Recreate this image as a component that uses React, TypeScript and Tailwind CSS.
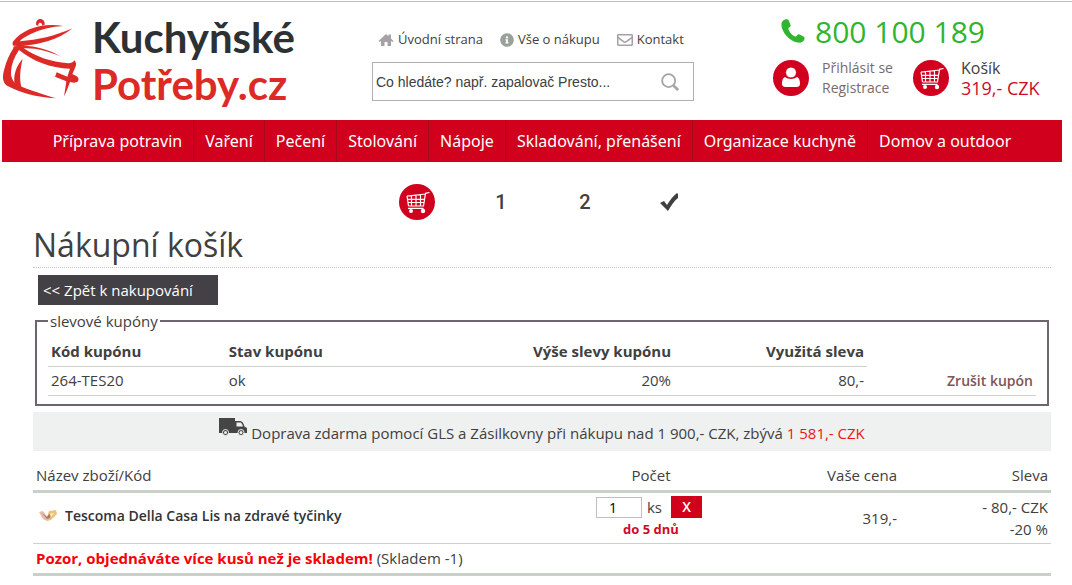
import type { ReactNode } from "react";
import { FaInfoCircle, FaRegEnvelope } from "react-icons/fa";

const categories = [
  "Příprava potravin",
  "Vaření",
  "Pečení",
  "Stolování",
  "Nápoje",
  "Skladování, přenášení",
  "Organizace kuchyně",
  "Domov a outdoor",
];

function PotLogo() {
  return (
    <svg viewBox="0 0 252 270" className="h-[90px] w-[84px] shrink-0" fill="#dc2b27" aria-hidden="true">
      <path d="M109 34C106 21 114 14 122 15c9 1 13 10 12 17l-7 3c0-6-3-9-7-9-4 0-5 4-5 9z" />
      <path fillRule="evenodd" d="M38 84C50 68 66 56 88 46c30-12 65-16 102-10-36 2-68 10-98 24-16 8-27 14-33 22 56-4 104-16 159-39-45 35-95 47-149 53-14 1-24 1-31-2z" />
      <path d="M41 97c50-7 98 6 143 31-40-17-79-27-113-25 38 25 80 41 134 45 8 0 14-2 18-9 6 6 7 13 3 21l-9 20c8 4 15 7 18 12 2 9-3 14-13 14l-12-2c-5 14-10 28-18 43 3-17 5-31 7-45l-34-14 5-13 32 13 8-24c-60-2-111-22-153-56-15 22-23 44-24 66-1 13 4 24 12 34 25 15 68 28 122 45-60-4-105-17-146-38-15-11-14-30-8-50 6-24 15-43 27-62z" />
      <path d="M44 215c-5-32 4-58 24-81-8 34-11 62-2 92z" />
    </svg>
  );
}

function CartBadge() {
  return (
    <svg viewBox="0 0 36 36" className="size-9 shrink-0" fill="none" aria-hidden="true">
      <circle cx="18" cy="18" r="18" fill="#d1001f" />
      <g stroke="#fff" strokeWidth="1.2">
        <path d="M30.500 8.500l-4 .8-2 12.700H9.500M8 12l18.500-2M8 12l1.500 10M8.500 15.300h17M9 18.500h16.200M12.500 11.500v10.500M17 11v11M21.500 10.500v11.500M9 24.300h15.500" />
      </g>
      <circle cx="12" cy="27" r="2" fill="#fff" />
      <circle cx="24" cy="27" r="2.200" fill="#fff" />
    </svg>
  );
}

function UserBadge() {
  return (
    <svg viewBox="0 0 36 36" className="size-9 shrink-0" aria-hidden="true">
      <circle cx="18" cy="18" r="18" fill="#d1001f" />
      <path fill="#fff" d="M12 17c-2.500 1-3 4-3 7 0 2 1.500 3 3.500 3h11c2 0 3.500-1 3.500-3 0-3-.5-6-3-7-3 2.600-9 2.600-12 0z" />
      <circle cx="18" cy="12.500" r="5.300" fill="#fff" stroke="#d1001f" strokeWidth=".6" />
    </svg>
  );
}

function HomeIcon() {
  return (
    <svg viewBox="0 0 16 16" className="size-4" fill="#a5a2a5" aria-hidden="true">
      <path d="M8 2l2.500 2.200V2.500H13v4L15.500 9l-1 1L13 9v5H9.500v-4h-3v4H3V9l-1.500 1-1-1z" />
    </svg>
  );
}

function TruckIcon() {
  return (
    <svg viewBox="0 0 28 18" className="mb-2 h-[18px] w-7" fill="#454545" aria-hidden="true">
      <path fillRule="evenodd" d="M0 0h16v3h5c3 0 4 4 4.500 5.500L28 10v5H0zM17.500 4.500v4H24c-.6-2-1.400-4-3-4z" />
      <circle cx="6.500" cy="14.500" r="3" stroke="#eff1f0" />
      <circle cx="22" cy="14.500" r="3" stroke="#eff1f0" />
      <circle cx="6.500" cy="14.500" r="1.500" fill="#eff1f0" />
      <circle cx="22" cy="14.500" r="1.500" fill="#eff1f0" />
    </svg>
  );
}

function Step({ children }: { children: ReactNode }) {
  return <li className="flex w-[84px] items-center justify-center">{children}</li>;
}

export default function App() {
  return (
    <div className="mt-px border-t border-[#bdbdbd] bg-white pb-2 font-['Open_Sans',sans-serif] text-[15px] text-[#404040]">
      <header className="flex h-[118px] items-start">
        <a href="#domu" className="flex w-[372px] shrink-0 items-start pt-3">
          <PotLogo />
          <span className="pl-2 font-['Lato',sans-serif] text-[42px] leading-[47px] font-bold text-[#2d3133]">
            Kuchyňské
            <span className="block text-[#dc2b27]">Potřeby.cz</span>
          </span>
        </a>

        <div className="w-[322px] shrink-0 pt-7">
          <nav className="flex h-5 items-center gap-[17px] px-1.5 text-[13px] whitespace-nowrap">
            <a href="#uvod" className="flex items-center gap-1">
              <HomeIcon />
              Úvodní strana
            </a>
            <a href="#nakup" className="flex items-center gap-1">
              <FaInfoCircle className="size-3.5 text-[#9aa09a]" />
              Vše o nákupu
            </a>
            <a href="#kontakt" className="flex items-center gap-1">
              <FaRegEnvelope className="size-4 text-[#a5a2a5]" />
              Kontakt
            </a>
          </nav>
          <form className="mt-3 flex h-[39px] items-center border border-[#b5acb5] pr-3.5 pl-[3px]">
            <input
              type="search"
              aria-label="Hledat"
              placeholder="Co hledáte? např. zapalovač Presto..."
              className="min-w-0 flex-1 font-['Liberation_Sans',sans-serif] text-sm outline-none placeholder:text-[#404040]"
            />
            <button type="button" aria-label="Vyhledat">
              <svg viewBox="0 0 20 20" className="size-[18px]" fill="none" stroke="#a5a5a5">
                <circle cx="8.500" cy="8.500" r="7.200" strokeWidth="2" />
                <path d="M14 14l5 5" strokeWidth="3" />
              </svg>
            </button>
          </form>
        </div>

        <div className="pt-[11px] pl-[79px] whitespace-nowrap">
          <a href="tel:800100189" className="flex h-9 items-center gap-2.5 pl-2 text-[30px] text-[#2fb52f]">
            <svg viewBox="0 0 24 24" className="size-6" fill="currentColor" aria-hidden="true">
              <path d="M4 .5C1 1.500 0 4 .5 7c1 7 8 15 16 16.500 3 .5 6 0 7-3.500.3-1-.2-2-1-2.500l-4-2c-1-.5-2 0-2.500 1-.6 1-1.500 1.200-2.500.7-3-1.500-5-4-6-7-.3-1 .2-1.700 1-2 1-.5 1.300-1.200 1-2.200L8 2C7.500.5 6 0 4 .5z" />
            </svg>
            800 100 189
          </a>
          <div className="mt-[9px] flex gap-5">
            <div className="flex items-center gap-[13px]">
              <UserBadge />
              <div className="flex flex-col text-sm leading-5 text-[#776b70]">
                <a href="#prihlaseni">Přihlásit se</a>
                <a href="#registrace">Registrace</a>
              </div>
            </div>
            <a href="#kosik" className="flex items-center gap-3">
              <CartBadge />
              <span className="flex flex-col text-base leading-5">
                Košík
                <span className="text-lg leading-5 text-[#cf0a27]">319,- CZK</span>
              </span>
            </a>
          </div>
        </div>
      </header>

      <nav className="mr-2.5 ml-0.5 flex h-[42px] justify-center bg-[#d1001c] font-['Noto_Sans',sans-serif] text-base whitespace-nowrap text-white">
        {categories.map((name) => (
          <a
            key={name}
            href="#kategorie"
            className="flex items-center border-r border-[#a50b20] px-[11px] last:border-r-0"
          >
            {name}
          </a>
        ))}
      </nav>

      <main className="mr-[21px] ml-[33px]">
        <ol className="mt-[22px] flex h-9 justify-center pl-0.5 font-['Roboto',sans-serif] text-xl font-medium">
          <Step><CartBadge /></Step>
          <Step>1</Step>
          <Step>2</Step>
          <Step>
            <svg viewBox="0 0 20 20" className="size-5" fill="#404040" aria-label="Hotovo">
              <path d="M1 11l4-2 3 4C11 8 14 4 18 1l1 1v4c-4 3-7 8-10 13z" />
            </svg>
          </Step>
        </ol>

        <h1 className="mt-1 border-b border-dotted border-[#c4c4c4] pb-px text-[32px] leading-[42px]">
          Nákupní košík
        </h1>

        <button type="button" className="mt-[7px] ml-[5px] flex h-[30px] w-[180px] items-center bg-[#434145] pl-[5px] text-[15px] text-white">
          &lt;&lt; Zpět k nakupování
        </button>

        <fieldset className="mx-0.5 mt-1.5 border-2 border-[#6e646e] px-[11px] pb-2">
          <legend className="px-0.5 leading-5">slevové kupóny</legend>
          <table className="mt-[5px] w-full border-collapse">
            <thead>
              <tr className="h-[30px] text-left">
                <th className="w-[18%] border-b border-[#cdd2cb] px-[3px]">Kód kupónu</th>
                <th className="w-[18%] border-b border-[#cdd2cb] px-[3px]">Stav kupónu</th>
                <th className="border-b border-[#cdd2cb] px-[3px] text-right">Výše slevy kupónu</th>
                <th className="w-[193px] border-b border-[#cdd2cb] px-[3px] text-right">Využitá sleva</th>
                <td className="w-[169px]" />
              </tr>
            </thead>
            <tbody>
              <tr className="h-[29px] border-b border-[#cdd2cb]">
                <td className="px-[3px]">264-TES20</td>
                <td className="px-[3px]">ok</td>
                <td className="px-[3px] text-right">20%</td>
                <td className="px-[3px] text-right">80,-</td>
                <td className="px-[3px] text-right">
                  <button type="button" className="text-sm font-semibold text-[#7d5555]">Zrušit kupón</button>
                </td>
              </tr>
            </tbody>
          </table>
        </fieldset>

        <p className="mt-1.5 flex h-[39px] items-center justify-center gap-1 bg-[#eff1f0]">
          <TruckIcon />
          <span className="pt-1">
            Doprava zdarma pomocí GLS a Zásilkovny při nákupu nad 1 900,- CZK, zbývá{" "}
            <span className="text-[#ee1515]">1 581,- CZK</span>
          </span>
        </p>

        <table className="mt-2.5 w-full border-collapse">
          <thead>
            <tr className="h-[31px] border-b-[3px] border-[#c9d0c9] text-left">
              <th className="px-[3px] font-normal">Název zboží/Kód</th>
              <th className="w-[170px] pr-0.5 text-center font-normal">Počet</th>
              <th className="w-[163px] px-[3px] text-right font-normal">Vaše cena</th>
              <th className="w-[151px] px-[3px] text-right font-normal">Sleva</th>
            </tr>
          </thead>
          <tbody>
            <tr className="h-[52px] border-b border-[#cdd2cb]">
              <td className="pb-1">
                <a href="#produkt" className="flex items-center gap-2 pl-1.5 text-sm font-semibold text-[#303336]">
                  <svg viewBox="0 0 18 12" className="h-3 w-[18px]" aria-hidden="true">
                    <path d="M0 2l4-1 5 7-1 3-4-2z" fill="#e3bda7" />
                    <path d="M8 7l2-6 7-1 1 4-6 6-4 1z" fill="#ecc27c" />
                    <path d="M3 3l5 6 3-1 1-3-2-1-2 3z" fill="#a97b6b" />
                    <path d="M11 4l4-1-3 4z" fill="#faf0d8" />
                  </svg>
                  Tescoma Della Casa Lis na zdravé tyčinky
                </a>
              </td>
              <td className="pr-0.5">
                <div className="flex flex-col items-center">
                  <div className="mr-1 flex items-center">
                    <input
                      type="text"
                      aria-label="Počet kusů"
                      defaultValue="1"
                      className="h-[21px] w-[46px] border border-[#c3bcc6] pr-3 text-center text-sm text-black"
                    />
                    <span className="px-[5px]">ks</span>
                    <button type="button" aria-label="Odebrat" className="ml-1 h-[22px] w-[31px] bg-[#d1001c] text-sm font-semibold text-white">
                      X
                    </button>
                  </div>
                  <span className="text-[13px] leading-[22px] font-bold text-[#cf0a27]">do 5 dnů</span>
                </div>
              </td>
              <td className="px-[3px] text-right">319,-</td>
              <td className="px-[3px] text-right leading-[22px]">
                - 80,- CZK
                <br />
                -20 %
              </td>
            </tr>
            <tr className="h-[31px] border-b-[3px] border-[#c9d0c9]">
              <td colSpan={4} className="px-[3px]">
                <strong className="text-[#f90008]">Pozor, objednáváte více kusů než je skladem!</strong> (Skladem -1)
              </td>
            </tr>
          </tbody>
        </table>
      </main>
    </div>
  );
}
